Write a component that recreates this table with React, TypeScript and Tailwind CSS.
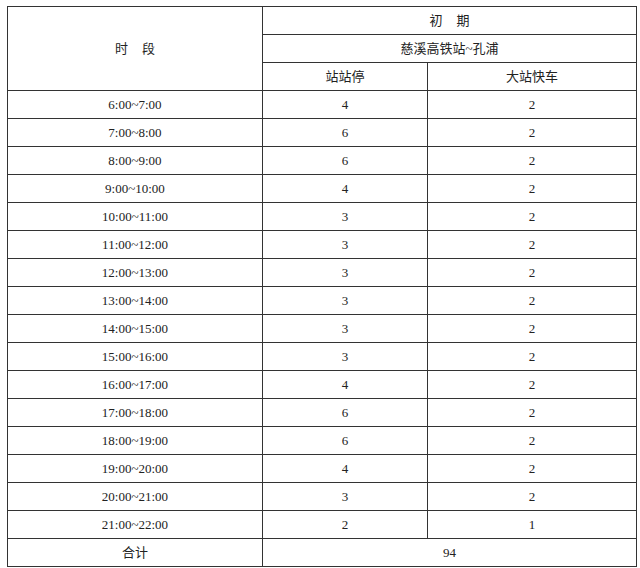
import React from 'react';

const rows: [string, string, string][] = [
  ['6:00~7:00', '4', '2'],
  ['7:00~8:00', '6', '2'],
  ['8:00~9:00', '6', '2'],
  ['9:00~10:00', '4', '2'],
  ['10:00~11:00', '3', '2'],
  ['11:00~12:00', '3', '2'],
  ['12:00~13:00', '3', '2'],
  ['13:00~14:00', '3', '2'],
  ['14:00~15:00', '3', '2'],
  ['15:00~16:00', '3', '2'],
  ['16:00~17:00', '4', '2'],
  ['17:00~18:00', '6', '2'],
  ['18:00~19:00', '6', '2'],
  ['19:00~20:00', '4', '2'],
  ['20:00~21:00', '3', '2'],
  ['21:00~22:00', '2', '1'],
];

const cell = 'border border-[#333] h-[28px] p-0 text-center align-middle';

export default function App() {
  return (
    <div
      className="w-[640px] h-[568px] bg-white pt-[6px] pl-[7px] text-[13px] text-[#222]"
      style={{ fontFamily: '"Liberation Serif", "Noto Sans CJK SC", serif' }}
    >
      <table className="border-collapse table-fixed w-[629px]">
        <colgroup>
          <col className="w-[255px]" />
          <col className="w-[165px]" />
          <col className="w-[209px]" />
        </colgroup>
        <tbody>
          <tr>
            <td rowSpan={3} className={cell}>
              <span className="tracking-[14px] pl-[14px]">时段</span>
            </td>
            <td colSpan={2} className={cell}>
              <span className="tracking-[14px] pl-[14px]">初期</span>
            </td>
          </tr>
          <tr>
            <td colSpan={2} className={cell}>
              慈溪高铁站~孔浦
            </td>
          </tr>
          <tr>
            <td className={cell}>站站停</td>
            <td className={cell}>大站快车</td>
          </tr>
          {rows.map(([time, a, b]) => (
            <tr key={time}>
              <td className={cell}>{time}</td>
              <td className={cell}>{a}</td>
              <td className={cell}>{b}</td>
            </tr>
          ))}
          <tr>
            <td className={cell}>合计</td>
            <td colSpan={2} className={cell}>
              94
            </td>
          </tr>
        </tbody>
      </table>
    </div>
  );
}
